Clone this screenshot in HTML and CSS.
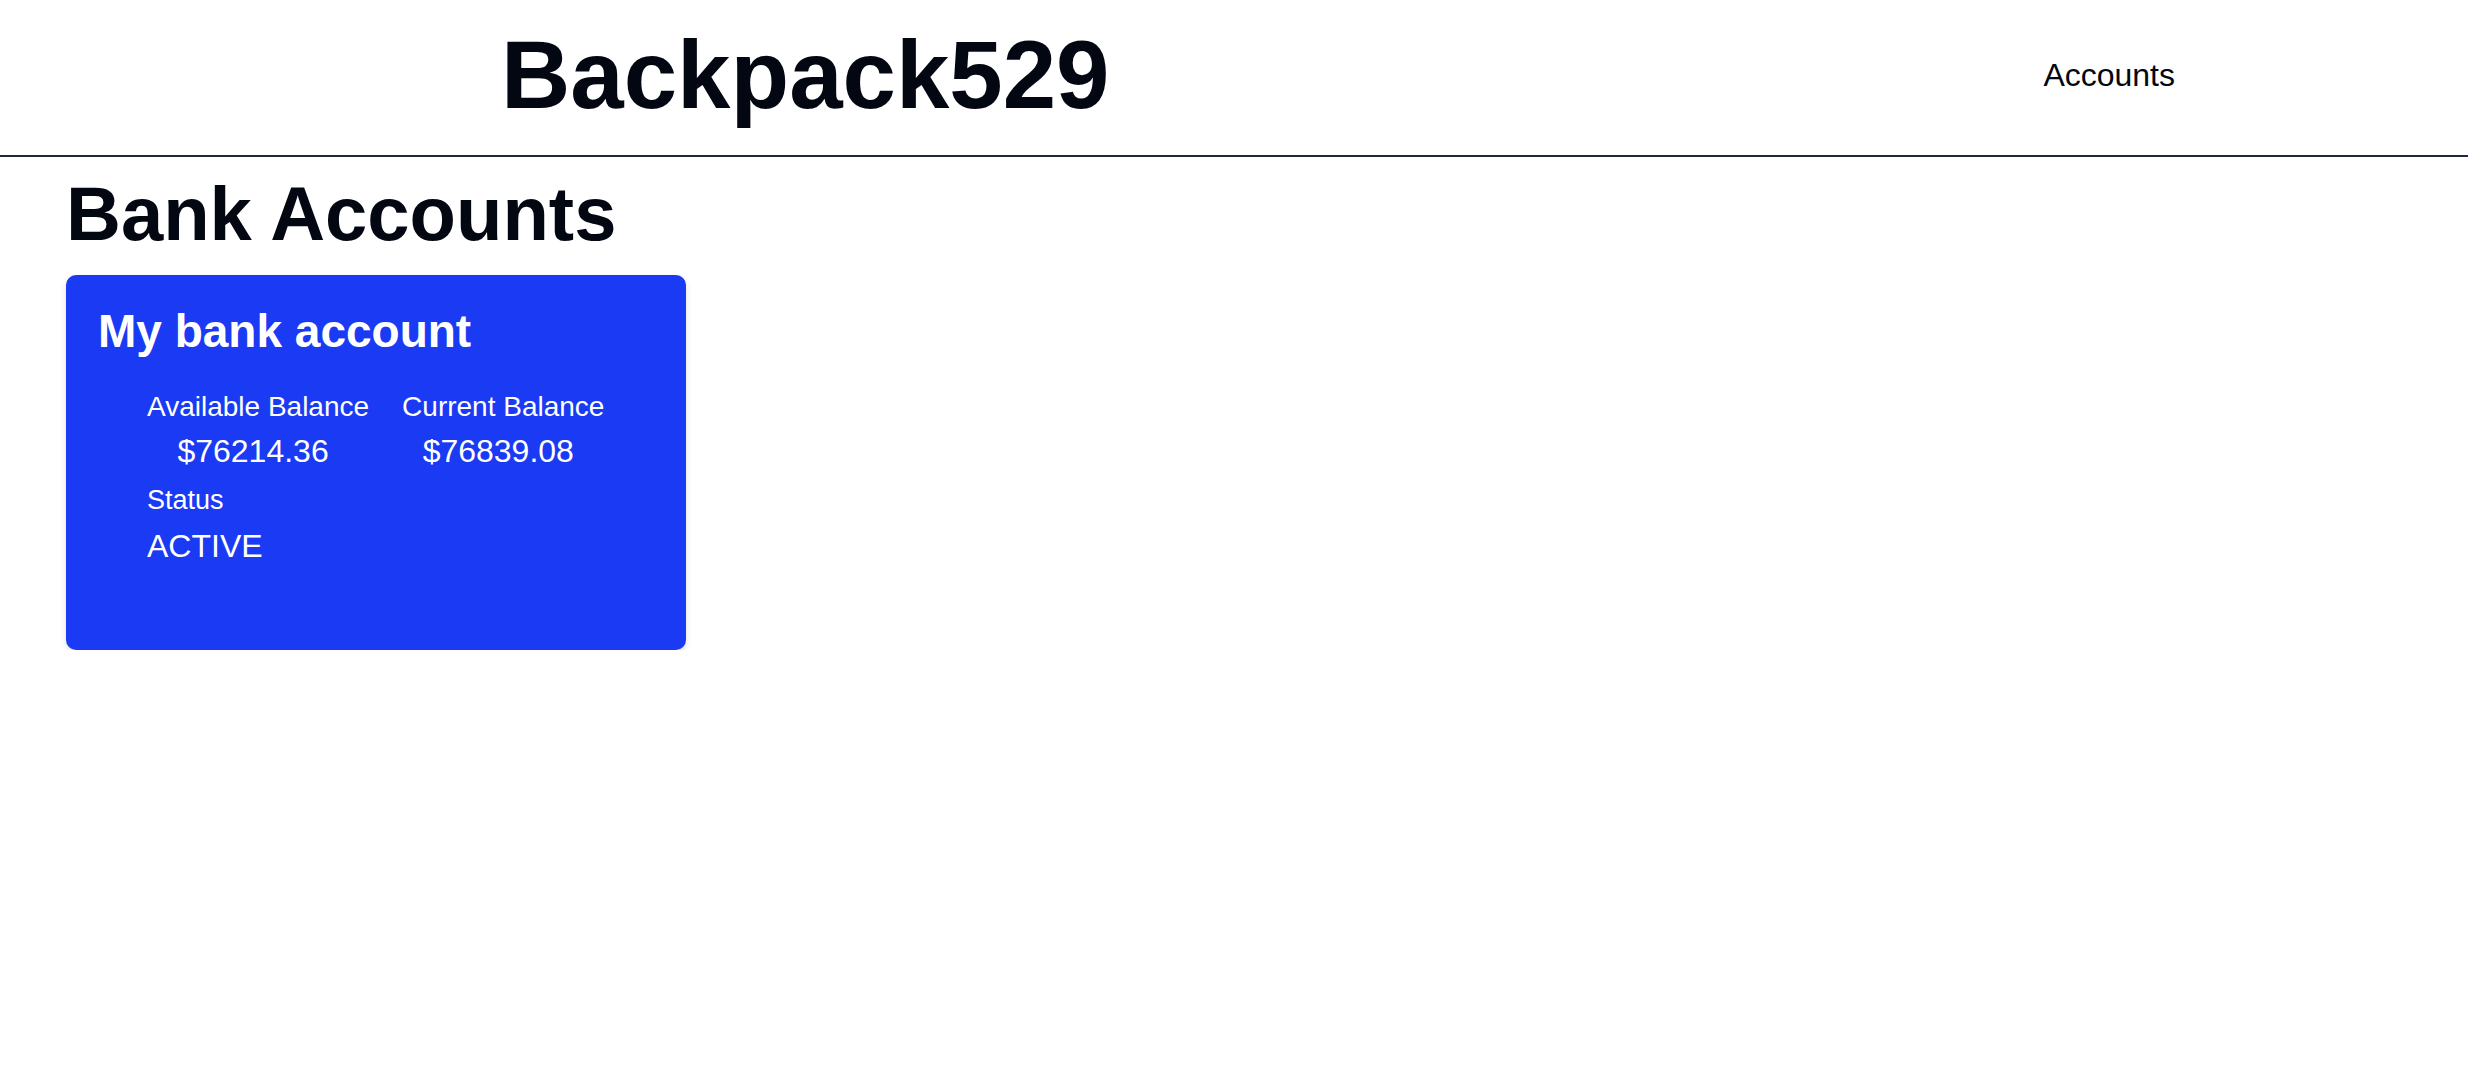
FILE: index.html
```html
<!DOCTYPE html>
<html lang="en">
<head>
<meta charset="utf-8">
<title>Backpack529</title>
<link rel="stylesheet" href="styles.css">
</head>
<body>
<header class="topbar">
  <h1 class="brand">Backpack529</h1>
  <nav class="nav"><a class="nav-link" href="#">Accounts</a></nav>
</header>
<main class="page">
  <h2 class="page-title">Bank Accounts</h2>
  <section class="card">
    <h3 class="card-title">My bank account</h3>
    <div class="balances">
      <div class="stat">
        <div class="stat-label">Available Balance</div>
        <div class="stat-value">$76214.36</div>
      </div>
      <div class="stat">
        <div class="stat-label">Current Balance</div>
        <div class="stat-value">$76839.08</div>
      </div>
    </div>
    <div class="status">
      <div class="status-label">Status</div>
      <div class="status-value">ACTIVE</div>
    </div>
  </section>
</main>
</body>
</html>
```

FILE: styles.css
```css
* { box-sizing: border-box; }
html, body { margin: 0; padding: 0; background: #ffffff; }
body {
  font-family: "Liberation Sans", Arial, Helvetica, sans-serif;
  color: #030712;
}
.topbar {
  display: flex;
  align-items: center;
  justify-content: space-between;
  padding: 27px 293px 32px 501px;
  border-bottom: 2px solid #1e2746;
}
.brand {
  margin: 0;
  font-size: 96px;
  line-height: 1;
  font-weight: 700;
}
.nav-link {
  font-size: 32px;
  line-height: 1;
  color: #030712;
  text-decoration: none;
}
.page {
  padding: 19px 0 0 66px;
}
.page-title {
  margin: 0 0 23px 0;
  font-size: 76px;
  line-height: 1;
  font-weight: 700;
}
.card {
  width: 620px;
  padding: 33px 32px 88px;
  background: #1a3af4;
  color: #ffffff;
  border-radius: 10px;
  box-shadow: 0 3px 6px rgba(0, 0, 0, 0.12);
}
.card-title {
  margin: 0;
  font-size: 46px;
  line-height: 1;
  font-weight: 700;
}
.balances {
  display: flex;
  gap: 33px;
  margin: 39px 0 0 49px;
}
.stat {
  display: flex;
  flex-direction: column;
  align-items: center;
  gap: 14px;
}
.stat-label {
  font-size: 28px;
  line-height: 1;
}
.stat-value {
  margin-right: 10px;
  font-size: 32px;
  line-height: 1;
}
.status {
  display: flex;
  flex-direction: column;
  gap: 16px;
  margin: 20px 0 0 49px;
}
.status-label {
  font-size: 27px;
  line-height: 1;
}
.status-value {
  font-size: 32px;
  line-height: 1;
}
```
